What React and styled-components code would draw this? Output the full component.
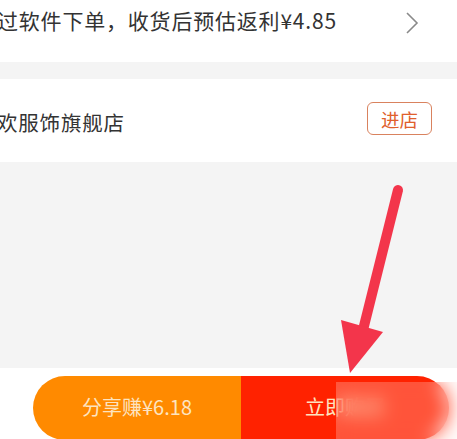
import React from 'react'
import styled, { createGlobalStyle } from 'styled-components'

const GlobalStyle = createGlobalStyle`
    html, body {
        margin: 0;
        padding: 0;
        background: #ffffff;
    }
    body {
        font-family: "Noto Sans CJK SC", "Noto Sans", sans-serif;
    }
`

const Page = styled.div`
    position: relative;
    width: 457px;
    height: 439px;
    overflow: hidden;
    background: #ffffff;
`

const InfoRow = styled.div`
    height: 62px;
    display: flex;
    justify-content: space-between;
    align-items: flex-start;
    padding-top: 5px;
    padding-right: 38px;
    box-sizing: border-box;
`

const RowText = styled.span`
    margin-left: ${props => props.offset || 0}px;
    font-size: ${props => props.size || 21}px;
    letter-spacing: 0.8px;
    line-height: 30px;
    color: #333333;
    white-space: nowrap;
`

const Chevron = styled.svg`
    margin-top: 6px;
`

const Divider = styled.div`
    height: ${props => props.h}px;
    background: #f4f4f4;
`

const ShopRow = styled.div`
    height: 83px;
    display: flex;
    justify-content: space-between;
    align-items: center;
    padding-right: 25px;
    box-sizing: border-box;
`

const ShopName = styled(RowText)`
    margin-top: 3px;
`

const EnterButton = styled.button`
    width: 65px;
    height: 33px;
    margin-top: -4px;
    padding: 0;
    border: 1.5px solid #d9825e;
    border-radius: 6px;
    background: #ffffff;
    color: #e0602c;
    font-family: "Noto Sans CJK SC", sans-serif;
    font-size: 18.5px;
    line-height: 30px;
`

const Footer = styled.div`
    padding: 8px 0 0 33px;
`

const ActionBar = styled.div`
    width: 416px;
    height: 64px;
    display: flex;
    border-radius: 32px;
    overflow: hidden;
`

const ActionButton = styled.button`
    flex: 1;
    border: none;
    padding: 0 0 4px;
    background: ${props => props.bg};
    color: #fde4c0;
    font-family: "Noto Sans CJK SC", sans-serif;
    font-size: 20px;
`

const ArrowMark = styled.svg`
    position: absolute;
    left: 0;
    top: 0;
    pointer-events: none;
`

const Mosaic = styled.div`
    position: absolute;
    left: 336px;
    top: 382px;
    width: 121px;
    height: 57px;
    backdrop-filter: blur(9px);
    background: rgba(255, 235, 230, 0.25);
`

export default function App() {
    return (
        <Page>
            <GlobalStyle />
            <InfoRow>
                <RowText offset={-3}>过软件下单，收货后预估返利¥4.85</RowText>
                <Chevron width="14" height="24" viewBox="0 0 14 24">
                    <path d="M2 2 L12 12 L2 22" fill="none" stroke="#8a8a8a" strokeWidth="1.6" />
                </Chevron>
            </InfoRow>
            <Divider h={17} />
            <ShopRow>
                <ShopName offset={-3} size={20.5}>欢服饰旗舰店</ShopName>
                <EnterButton>进店</EnterButton>
            </ShopRow>
            <Divider h={206} />
            <Footer>
                <ActionBar>
                    <ActionButton bg="#ff8a00">分享赚¥6.18</ActionButton>
                    <ActionButton bg="#ff2200">立即购买</ActionButton>
                </ActionBar>
            </Footer>
            <ArrowMark width="457" height="439" viewBox="0 0 457 439">
                <line x1="398" y1="190" x2="364" y2="326" stroke="#f3354b" strokeWidth="10" strokeLinecap="round" />
                <polygon points="341,320 383,332 350,373" fill="#f3354b" />
            </ArrowMark>
            <Mosaic />
        </Page>
    )
}
